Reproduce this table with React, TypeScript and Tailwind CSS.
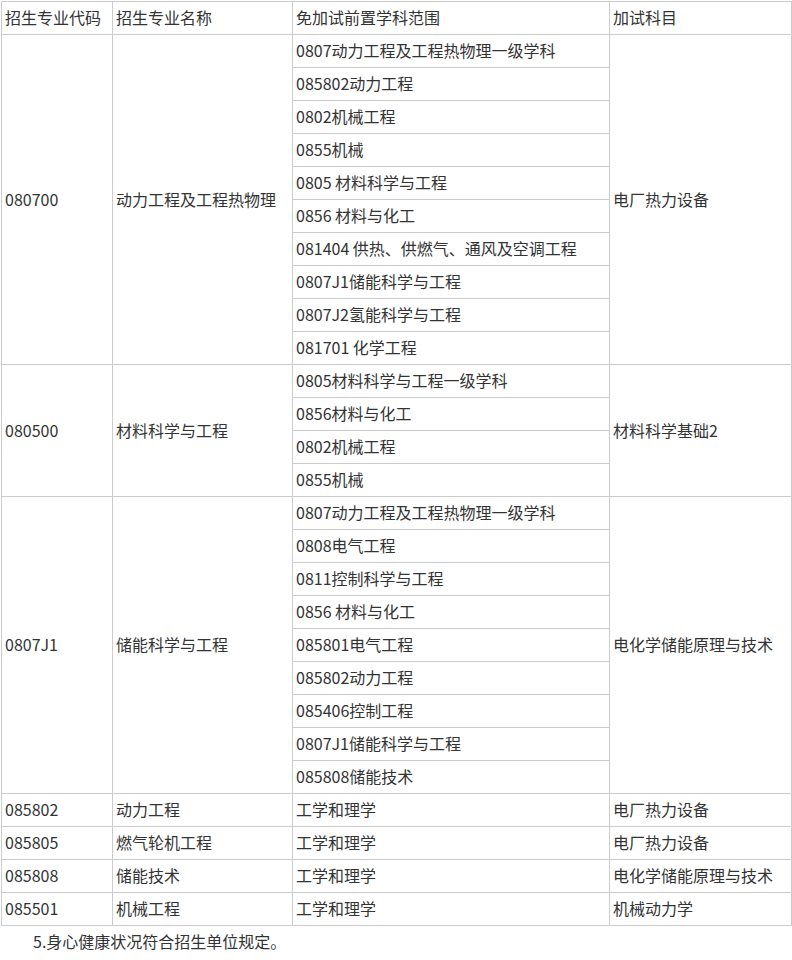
import React from "react";

type Group = { code: string; name: string; subs: string[]; exam: string };

const groups: Group[] = [
  {
    code: "080700",
    name: "动力工程及工程热物理",
    subs: [
      "0807动力工程及工程热物理一级学科",
      "085802动力工程",
      "0802机械工程",
      "0855机械",
      "0805 材料科学与工程",
      "0856 材料与化工",
      "081404 供热、供燃气、通风及空调工程",
      "0807J1储能科学与工程",
      "0807J2氢能科学与工程",
      "081701 化学工程",
    ],
    exam: "电厂热力设备",
  },
  {
    code: "080500",
    name: "材料科学与工程",
    subs: ["0805材料科学与工程一级学科", "0856材料与化工", "0802机械工程", "0855机械"],
    exam: "材料科学基础2",
  },
  {
    code: "0807J1",
    name: "储能科学与工程",
    subs: [
      "0807动力工程及工程热物理一级学科",
      "0808电气工程",
      "0811控制科学与工程",
      "0856 材料与化工",
      "085801电气工程",
      "085802动力工程",
      "085406控制工程",
      "0807J1储能科学与工程",
      "085808储能技术",
    ],
    exam: "电化学储能原理与技术",
  },
];

const singles = [
  ["085802", "动力工程", "工学和理学", "电厂热力设备"],
  ["085805", "燃气轮机工程", "工学和理学", "电厂热力设备"],
  ["085808", "储能技术", "工学和理学", "电化学储能原理与技术"],
  ["085501", "机械工程", "工学和理学", "机械动力学"],
];

const td =
  "border border-[#cccccc] h-[33px] pl-[3px] pr-[4px] pt-0 pb-[2px] align-middle text-left font-normal leading-[20px]";

export default function App() {
  return (
    <div
      className="bg-white text-[#333333] text-[16px] w-[792px] min-h-[960px]"
      style={{ fontFamily: '"Noto Sans CJK SC", "Noto Sans", sans-serif' }}
    >
      <div className="pt-px pl-px">
        <table className="border-collapse table-fixed w-[790px]">
          <colgroup>
            <col className="w-[111px]" />
            <col className="w-[180px]" />
            <col className="w-[317px]" />
            <col className="w-[182px]" />
          </colgroup>
          <tbody>
            <tr>
              <td className={td}>招生专业代码</td>
              <td className={td}>招生专业名称</td>
              <td className={td}>免加试前置学科范围</td>
              <td className={td}>加试科目</td>
            </tr>
            {groups.map((g) =>
              g.subs.map((s, i) => (
                <tr key={g.code + i}>
                  {i === 0 && (
                    <td className={td} rowSpan={g.subs.length}>
                      {g.code}
                    </td>
                  )}
                  {i === 0 && (
                    <td className={td} rowSpan={g.subs.length}>
                      {g.name}
                    </td>
                  )}
                  <td className={td}>{s}</td>
                  {i === 0 && (
                    <td className={td} rowSpan={g.subs.length}>
                      {g.exam}
                    </td>
                  )}
                </tr>
              ))
            )}
            {singles.map((r) => (
              <tr key={r[0]}>
                {r.map((c, j) => (
                  <td key={j} className={td}>
                    {c}
                  </td>
                ))}
              </tr>
            ))}
          </tbody>
        </table>
      </div>
      <p className="pl-[33px] pt-[4px] leading-[22px]">5.身心健康状况符合招生单位规定。</p>
    </div>
  );
}
